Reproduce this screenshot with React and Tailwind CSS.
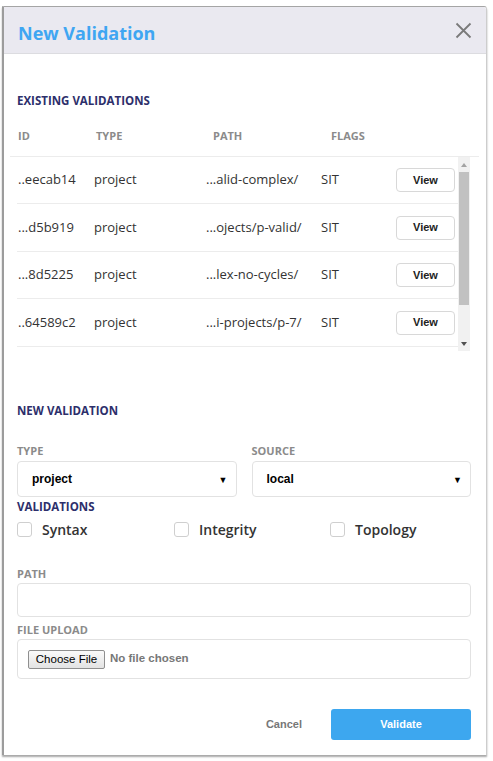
import { useState } from 'react';

const rows = [
  { id: '..eecab14', type: 'project', path: '...alid-complex/', flags: 'SIT' },
  { id: '...d5b919', type: 'project', path: '...ojects/p-valid/', flags: 'SIT' },
  { id: '...8d5225', type: 'project', path: '...lex-no-cycles/', flags: 'SIT' },
  { id: '..64589c2', type: 'project', path: '...i-projects/p-7/', flags: 'SIT' },
];

const sans = "font-['Open_Sans',sans-serif]";
const arial = "font-['Liberation_Sans',Arial,sans-serif]";

function SectionTitle({ children, className = '' }) {
  return (
    <div className={`${sans} text-[11.5px] leading-[16px] font-bold text-[#2d2f6b] ${className}`}>
      {children}
    </div>
  );
}

function FieldLabel({ children, className = '' }) {
  return (
    <div className={`${sans} text-[11px] leading-[16px] font-bold text-[#8b8b8b] ${className}`}>
      {children}
    </div>
  );
}

function Select({ value }) {
  return (
    <div className="relative flex-1 h-[36px] border border-[#e2e2e2] rounded-[4px] bg-white flex items-center pl-[14px] pr-[8px]">
      <span className={`${arial} text-[12px] font-bold text-black flex-1`}>{value}</span>
      <span className="text-[9px] text-black leading-none">▼</span>
    </div>
  );
}

function Check({ label, checked, onToggle }) {
  return (
    <label className="flex items-center gap-[10px] cursor-pointer" onClick={onToggle}>
      <span className={`w-[15px] h-[15px] rounded-[3px] border border-[#cfcfcf] bg-white ${checked ? 'bg-[#3da7ef]' : ''}`} />
      <span className={`${sans} text-[14px] font-semibold text-[#333]`}>{label}</span>
    </label>
  );
}

export default function App() {
  const [checks, setChecks] = useState({ syntax: false, integrity: false, topology: false });
  const toggle = (k) => setChecks({ ...checks, [k]: !checks[k] });

  return (
    <div className="min-h-[761px] bg-white pt-[6px] pl-[2px]">
      <div className="w-[485px] h-[749px] flex flex-col border-l-2 border-t border-r border-l-[#9c9c9c] border-t-[#a5a5a5] border-r-[#cdcdcd] rounded-tr-[3px] shadow-[0_2px_2px_rgba(0,0,0,0.35)] bg-white">
        <div className="h-[47px] shrink-0 flex items-center justify-between bg-[#eae9f0] border-b border-[#dcdce0] pl-[14px] pr-[14px] pt-[6px] rounded-tr-[3px]">
          <h1 className={`${sans} text-[18px] font-bold text-[#3fa6f2]`}>New Validation</h1>
          <button className="-mt-[6px] text-[#7a7a7a]">
            <svg width="17" height="17" viewBox="0 0 17 17" fill="none" stroke="currentColor" strokeWidth="1.8">
              <path d="M1.5 1.5 L15.5 15.5 M15.5 1.5 L1.5 15.5" />
            </svg>
          </button>
        </div>

        <div className="flex-1 flex flex-col pl-[13px] pr-[15px]">
          <SectionTitle className="mt-[39px]">EXISTING VALIDATIONS</SectionTitle>

          <div className={`${sans} flex mt-[19px] pl-[1px] text-[11px] leading-[16px] font-bold text-[#8b8b8b]`}>
            <span className="w-[78px]">ID</span>
            <span className="w-[117px]">TYPE</span>
            <span className="w-[118px]">PATH</span>
            <span>FLAGS</span>
          </div>

          <div className="-ml-[7px] -mr-[8px] mt-[12px] border-t border-[#ececec] flex h-[195px]">
            <div className="flex-1 pl-[7px] overflow-hidden">
              {rows.map((r) => (
                <div key={r.id} className={`${sans} h-[47px] even:h-[48px] border-b border-[#ececec] flex items-center pl-[1px] text-[13px] text-[#333]`}>
                  <span className="w-[76px]">{r.id}</span>
                  <span className="w-[112px]">{r.type}</span>
                  <span className="w-[115px]">{r.path}</span>
                  <span className="w-[75px]">{r.flags}</span>
                  <button className={`${arial} w-[59px] h-[24px] border border-[#d8d8d8] rounded-[4px] bg-white text-[11px] font-bold text-[#222]`}>
                    View
                  </button>
                </div>
              ))}
            </div>
            <div className="w-[12px] mr-[9px] bg-[#f1f1f1] flex flex-col">
              <div className="h-[15px] flex items-center justify-center">
                <span className="w-0 h-0 border-l-[3.5px] border-r-[3.5px] border-b-[4px] border-l-transparent border-r-transparent border-b-[#a3a3a3]" />
              </div>
              <div className="h-[133px] mx-[1px] bg-[#c1c1c1]" />
              <div className="flex-1 flex items-end justify-center pb-[5px]">
                <span className="w-0 h-0 border-l-[3.5px] border-r-[3.5px] border-t-[4px] border-l-transparent border-r-transparent border-t-[#505050]" />
              </div>
            </div>
          </div>

          <SectionTitle className="mt-[52px]">NEW VALIDATION</SectionTitle>

          <div className="flex gap-[15px] mt-[24px]">
            <div className="flex-1 flex flex-col">
              <FieldLabel>TYPE</FieldLabel>
              <div className="flex mt-[2px]">
                <Select value="project" />
              </div>
            </div>
            <div className="flex-1 flex flex-col">
              <FieldLabel>SOURCE</FieldLabel>
              <div className="flex mt-[2px]">
                <Select value="local" />
              </div>
            </div>
          </div>

          <SectionTitle className="mt-[2px]">VALIDATIONS</SectionTitle>
          <div className="grid grid-cols-[157px_156px_1fr] h-[20px] mt-[4px]">
            <Check label="Syntax" checked={checks.syntax} onToggle={() => toggle('syntax')} />
            <Check label="Integrity" checked={checks.integrity} onToggle={() => toggle('integrity')} />
            <Check label="Topology" checked={checks.topology} onToggle={() => toggle('topology')} />
          </div>

          <FieldLabel className="mt-[27px]">PATH</FieldLabel>
          <input className="mt-[1px] h-[34px] border border-[#e2e2e2] rounded-[4px] outline-none px-[10px]" />

          <FieldLabel className="mt-[5px]">FILE UPLOAD</FieldLabel>
          <div className="mt-[1px] h-[40px] border border-[#e2e2e2] rounded-[4px] flex items-center pl-[10px] gap-[5px]">
            <button className={`${arial} h-[19px] w-[77px] border border-[#8f8f8f] rounded-[2px] bg-gradient-to-b from-[#fafafa] to-[#e3e3e3] text-[11.5px] text-black`}>
              Choose File
            </button>
            <span className={`${arial} text-[11.5px] font-bold text-[#777]`}>No file chosen</span>
          </div>

          <div className="mt-[30px] flex items-center justify-end gap-[29px]">
            <button className={`${arial} text-[11px] font-bold text-[#777]`}>Cancel</button>
            <button className={`${arial} w-[140px] h-[31px] rounded-[3px] bg-[#3da7ef] text-[11px] font-bold text-white`}>
              Validate
            </button>
          </div>
        </div>
      </div>
    </div>
  );
}
